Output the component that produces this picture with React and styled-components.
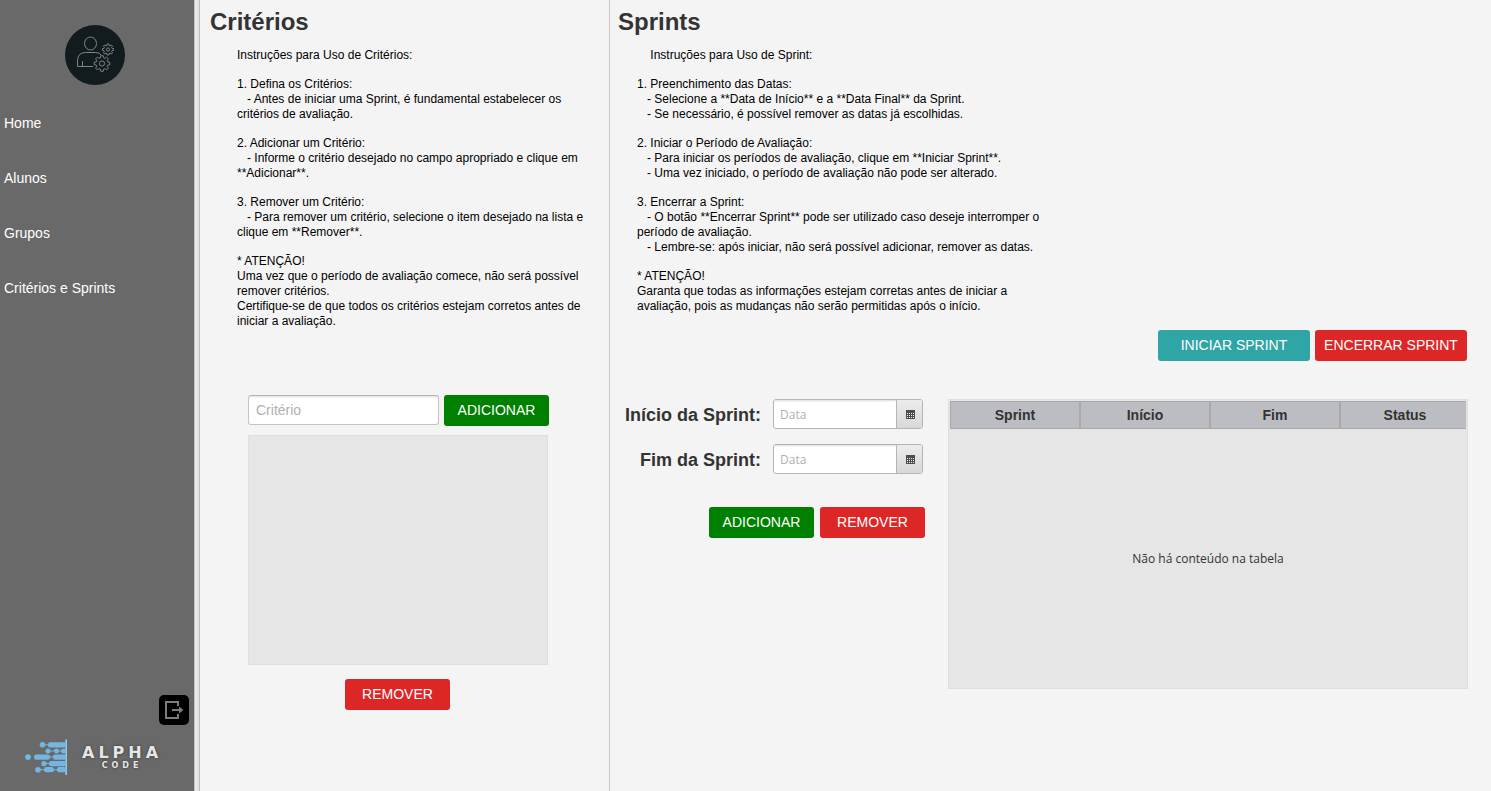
import React from "react";
import styled, { createGlobalStyle } from "styled-components";

const GlobalStyle = createGlobalStyle`
  *, *::before, *::after { box-sizing: border-box; }
  body {
    margin: 0;
    background: #f4f4f4;
    color: #333;
    font-family: "Liberation Sans", Arial, sans-serif;
    font-size: 14px;
  }
  h1, p { margin: 0; }
`;

const Shell = styled.div`
  display: flex;
  min-height: 100vh;
`;

const Sidebar = styled.aside`
  flex: 0 0 194px;
  display: flex;
  flex-direction: column;
  padding-top: 25px;
  background: #696969;
`;

const Divider = styled.div`
  flex: 0 0 6px;
  border: solid #c0c0c0;
  border-width: 0 1px;
  background: linear-gradient(to right, #f0f0f0, #dcdcdc);
`;

const Avatar = styled.svg`
  display: block;
  align-self: center;
  width: 60px;
  height: 60px;
  margin: 0 4px 25px 0;
`;

const Nav = styled.nav`
  display: flex;
  flex-direction: column;
  gap: 29px;
`;

const NavLink = styled.a`
  padding: 0 4px;
  color: #fff;
  font-size: 14px;
  line-height: 26px;
  text-decoration: none;
`;

const SidebarFoot = styled.div`
  display: flex;
  flex-direction: column;
  margin-top: auto;
  padding-bottom: 15px;
`;

const LogoutButton = styled.button`
  align-self: flex-end;
  width: 30px;
  height: 30px;
  margin: 0 5px 13px 0;
  padding: 0;
  border: 0;
  border-radius: 5px;
  background: #000;
  svg { display: block; }
`;

const Brand = styled.div`
  display: flex;
  align-items: center;
  gap: 14px;
  padding-left: 24px;
  color: #e6e6e6;
  font-family: "DejaVu Sans", sans-serif;
  font-weight: bold;
  text-shadow: 0 0 3px #333;
`;

const BrandName = styled.div`
  display: flex;
  flex-direction: column;
  align-items: center;
`;

const BrandTitle = styled.span`
  font-size: 16px;
  line-height: 17px;
  letter-spacing: 4px;
`;

const BrandSub = styled.span`
  font-size: 8px;
  line-height: 9px;
  letter-spacing: 4px;
`;

const Criteria = styled.section`
  flex: 0 0 410px;
  padding: 8px 10px;
  border-right: 1px solid #c8c8c8;
`;

const Sprints = styled.section`
  flex: 1;
  min-width: 0;
  padding: 8px 23px 8px 8px;
`;

const Title = styled.h1`
  font-size: 24px;
  line-height: 28px;
`;

const Instructions = styled.div`
  display: flex;
  flex-direction: column;
  gap: 14px;
  width: ${(p) => (p.$wide ? 410 : 350)}px;
  margin: 12px 0 0 ${(p) => (p.$wide ? 19 : 27)}px;
  color: #000;
  font-size: 12px;
  line-height: 15px;
  white-space: pre-wrap;
`;

const colors = { green: "#008000", red: "#dd2727", teal: "#30a5a5" };

const Button = styled.button`
  flex: none;
  width: ${(p) => (p.$wide ? 152 : 105)}px;
  height: 31px;
  padding: 0;
  border: 0;
  border-radius: 3px;
  background: ${(p) => colors[p.$color]};
  color: #fff;
  font-family: inherit;
  font-size: 14px;
  line-height: 31px;
  white-space: nowrap;
`;

const CriteriaForm = styled.form`
  display: flex;
  flex-direction: column;
  align-items: center;
  width: 301px;
  margin: 66px 0 0 38px;
`;

const InputRow = styled.div`
  display: flex;
  align-self: stretch;
  gap: 5px;
  margin-bottom: 9px;
`;

const TextInput = styled.input`
  flex: 1;
  min-width: 0;
  height: 30px;
  padding: 0 7px;
  border: 1px solid #c4c4c4;
  border-top-color: #b5b5b5;
  border-radius: 3px;
  background: #fff;
  box-shadow: inset 0 2px 2px -1px #ddd;
  font-family: inherit;
  font-size: 14px;
  &::placeholder { color: #b0b0b0; opacity: 1; }
`;

const CriteriaList = styled.ul`
  align-self: stretch;
  height: 230px;
  margin: 0 1px 14px 0;
  padding: 0;
  border: 1px solid #e0dede;
  background: #e6e6e6;
  list-style: none;
`;

const Actions = styled.div`
  display: flex;
  justify-content: flex-end;
  gap: ${(p) => p.$gap || 5}px;
`;

const ListActions = styled(Actions)`
  align-self: stretch;
  justify-content: center;
  padding-right: 2px;
`;

const SprintActions = styled(Actions)`
  margin: 16px 1px 38px 0;
`;

const SprintArea = styled.div`
  display: flex;
  align-items: flex-start;
  gap: 23px;
`;

const DateForm = styled.form`
  flex: 0 0 307px;
  display: flex;
  flex-direction: column;
  gap: 15px;
`;

const DateRow = styled.div`
  display: flex;
  align-items: center;
  justify-content: flex-end;
  gap: 12px;
  padding-right: 2px;
`;

const DateLabel = styled.label`
  padding-top: 2px;
  font-size: 18px;
  font-weight: bold;
  line-height: 28px;
`;

const DateField = styled.div`
  display: flex;
  width: 150px;
  height: 30px;
  border: 1px solid #b5b5b5;
  border-radius: 3px;
  background: #fff;
  overflow: hidden;
`;

const DateInput = styled.input`
  flex: 1;
  min-width: 0;
  padding: 0 6px;
  border: 0;
  background: transparent;
  box-shadow: inset 0 2px 2px -1px #ddd;
  font-family: "Open Sans", sans-serif;
  font-size: 12px;
  &::placeholder { color: #b0b0b0; opacity: 1; }
`;

const CalendarButton = styled.button`
  display: flex;
  align-items: center;
  justify-content: center;
  width: 26px;
  padding: 0 0 0 2px;
  border: 0;
  border-left: 1px solid #b5b5b5;
  background: linear-gradient(#ececec, #d8d8d8);
`;

const DateActions = styled(Actions)`
  margin-top: 18px;
`;

const TableBox = styled.div`
  flex: 1;
  min-width: 0;
  height: 290px;
  padding: 1px;
  border: 1px solid #e0dede;
  background: #e6e6e6;
`;

const TableClip = styled.div`
  height: 100%;
  overflow: hidden;
`;

const Table = styled.table`
  width: calc(100% + 4px);
  height: 100%;
  border-collapse: separate;
  border-spacing: 0;
  table-layout: fixed;
`;

const HeadCell = styled.th`
  height: 28px;
  padding: 0;
  border: solid #a9a9a9;
  border-width: 1px;
  background: #bcbdc2;
  font-size: 14px;
`;

const EmptyCell = styled.td`
  padding: 0 4px 0 0;
  text-align: center;
  font-family: "Open Sans", sans-serif;
  font-size: 12px;
`;

function gearPath(cx, cy, inner, outer, teeth) {
  const step = (2 * Math.PI) / teeth;
  const points = [];
  for (let i = 0; i < teeth; i += 1) {
    [[-0.32, inner], [-0.2, outer], [0.2, outer], [0.32, inner]].forEach(([turn, radius]) => {
      const angle = (i + turn) * step;
      points.push(`${(cx + radius * Math.cos(angle)).toFixed(2)} ${(cy + radius * Math.sin(angle)).toFixed(2)}`);
    });
  }
  return `M${points.join("L")}Z`;
}

function AvatarIcon() {
  return (
    <Avatar viewBox="0 0 60 60" fill="none" stroke="#7d8486" strokeLinejoin="round" role="img" aria-label="Perfil">
      <circle cx="30" cy="30" r="30" fill="#121b1e" stroke="none" />
      <ellipse cx="25.500" cy="18.500" rx="6" ry="6.500" />
      <path d="M28 41.500H12.500V36q0-8.500 8-8.500h10q4 0 5.500 2.500M17.500 41v-5" />
      <path d={gearPath(43, 24.5, 4.2, 5.6, 8)} />
      <circle cx="43" cy="24.500" r="1.600" />
      <path d={gearPath(37, 38.5, 6, 7.9, 8)} />
      <circle cx="37" cy="38.500" r="2.600" />
    </Avatar>
  );
}

function LogoutIcon() {
  return (
    <svg width="30" height="30" viewBox="0 0 30 30" fill="none" stroke="#7c7c7c" strokeWidth="2">
      <path d="M19 11V7H7V23H19V19M13 15H22" />
      <path d="M20 11.500L24.500 15L20 18.500Z" fill="#7c7c7c" stroke="none" />
    </svg>
  );
}

function BrandMark() {
  return (
    <svg width="44" height="38" viewBox="0 0 44 38" fill="#74b5e2" aria-hidden="true">
      <path d="M41.300 1.500h1.600v35.500h-1.600z" fill="#9ccdf0" />
      <path d="M18 6.300h24v1H18zM24 12.600h18v1H24zM10 18.600h32v1H10zM20 25.100h22v1H20zM14 31.200h28v1H14z" />
      <circle cx="18.500" cy="6.800" r="2.800" />
      <rect x="24" y="4.200" width="18" height="5.200" rx="2" />
      <circle cx="24" cy="13.100" r="2.500" />
      <circle cx="32.500" cy="13.100" r="2.500" />
      <rect x="37" y="10.700" width="5" height="4.800" rx="2.200" />
      <circle cx="4" cy="19.100" r="2.900" />
      <rect x="10" y="16.600" width="16" height="5.200" rx="2.400" />
      <rect x="29" y="16.600" width="13" height="5.200" rx="2" />
      <circle cx="20" cy="25.600" r="2.700" />
      <rect x="25" y="23" width="17" height="5.200" rx="2" />
      <circle cx="14" cy="31.700" r="2.800" />
      <rect x="20" y="29.100" width="10" height="5.200" rx="2.400" />
      <rect x="33" y="29.100" width="9" height="5.200" rx="2" />
    </svg>
  );
}

function CalendarIcon() {
  return (
    <svg width="9" height="9" viewBox="0 0 9 9" shapeRendering="crispEdges" aria-hidden="true">
      <path d="M0 0h9v9H0z" fill="#4d4d4d" />
      <path
        d="M1 3h1v1h-1zM3 3h1v1h-1zM5 3h1v1h-1zM7 3h1v1h-1zM1 5h1v1h-1zM3 5h1v1h-1zM5 5h1v1h-1zM7 5h1v1h-1zM1 7h1v1h-1zM3 7h1v1h-1zM5 7h1v1h-1zM7 7h1v1h-1z"
        fill="#eee"
      />
    </svg>
  );
}

function DatePicker({ id, label }) {
  return (
    <DateRow>
      <DateLabel htmlFor={id}>{label}</DateLabel>
      <DateField>
        <DateInput id={id} type="text" placeholder="Data" />
        <CalendarButton type="button" aria-label={"Abrir calendário: " + label}>
          <CalendarIcon />
        </CalendarButton>
      </DateField>
    </DateRow>
  );
}

const pages = ["Home", "Alunos", "Grupos", "Critérios e Sprints"];

const criteriaHelp = [
  "Instruções para Uso de Critérios:",
  "1. Defina os Critérios:\n   - Antes de iniciar uma Sprint, é fundamental estabelecer os critérios de avaliação.",
  "2. Adicionar um Critério:\n   - Informe o critério desejado no campo apropriado e clique em **Adicionar**.",
  "3. Remover um Critério:\n   - Para remover um critério, selecione o item desejado na lista e clique em **Remover**.",
  "* ATENÇÃO!\nUma vez que o período de avaliação comece, não será possível remover critérios.\nCertifique-se de que todos os critérios estejam corretos antes de iniciar a avaliação.",
];

const sprintHelp = [
  "    Instruções para Uso de Sprint:",
  "1. Preenchimento das Datas:\n   - Selecione a **Data de Início** e a **Data Final** da Sprint.\n   - Se necessário, é possível remover as datas já escolhidas.",
  "2. Iniciar o Período de Avaliação:\n   - Para iniciar os períodos de avaliação, clique em **Iniciar Sprint**.\n   - Uma vez iniciado, o período de avaliação não pode ser alterado.",
  "3. Encerrar a Sprint:\n   - O botão **Encerrar Sprint** pode ser utilizado caso deseje interromper o período de avaliação.\n   - Lembre-se: após iniciar, não será possível adicionar, remover as datas.",
  "* ATENÇÃO!\nGaranta que todas as informações estejam corretas antes de iniciar a avaliação, pois as mudanças não serão permitidas após o início.",
];

const columns = ["Sprint", "Início", "Fim", "Status"];

export default function App() {
  return (
    <>
      <GlobalStyle />
      <Shell>
        <Sidebar>
          <AvatarIcon />
          <Nav>
            {pages.map((page) => (
              <NavLink key={page} href="#">{page}</NavLink>
            ))}
          </Nav>
          <SidebarFoot>
            <LogoutButton type="button" aria-label="Sair">
              <LogoutIcon />
            </LogoutButton>
            <Brand>
              <BrandMark />
              <BrandName>
                <BrandTitle>ALPHA</BrandTitle>
                <BrandSub>CODE</BrandSub>
              </BrandName>
            </Brand>
          </SidebarFoot>
        </Sidebar>
        <Divider />

        <Criteria>
          <Title>Critérios</Title>
          <Instructions>
            {criteriaHelp.map((text) => <p key={text}>{text}</p>)}
          </Instructions>
          <CriteriaForm>
            <InputRow>
              <TextInput type="text" placeholder="Critério" aria-label="Critério" />
              <Button type="button" $color="green">ADICIONAR</Button>
            </InputRow>
            <CriteriaList aria-label="Critérios" />
            <ListActions>
              <Button type="button" $color="red">REMOVER</Button>
            </ListActions>
          </CriteriaForm>
        </Criteria>

        <Sprints>
          <Title>Sprints</Title>
          <Instructions $wide>
            {sprintHelp.map((text) => <p key={text}>{text}</p>)}
          </Instructions>
          <SprintActions>
            <Button type="button" $wide $color="teal">INICIAR SPRINT</Button>
            <Button type="button" $wide $color="red">ENCERRAR SPRINT</Button>
          </SprintActions>
          <SprintArea>
            <DateForm>
              <DatePicker id="inicio" label="Início da Sprint:" />
              <DatePicker id="fim" label="Fim da Sprint:" />
              <DateActions $gap={6}>
                <Button type="button" $color="green">ADICIONAR</Button>
                <Button type="button" $color="red">REMOVER</Button>
              </DateActions>
            </DateForm>
            <TableBox>
              <TableClip>
                <Table>
                  <thead>
                    <tr>
                      {columns.map((name) => (
                        <HeadCell key={name} scope="col">{name}</HeadCell>
                      ))}
                    </tr>
                  </thead>
                  <tbody>
                    <tr>
                      <EmptyCell colSpan={columns.length}>Não há conteúdo na tabela</EmptyCell>
                    </tr>
                  </tbody>
                </Table>
              </TableClip>
            </TableBox>
          </SprintArea>
        </Sprints>
      </Shell>
    </>
  );
}
